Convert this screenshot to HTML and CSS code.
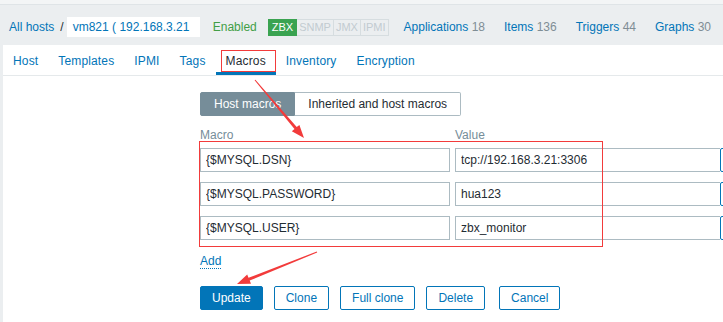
FILE: index.html
```html
<!DOCTYPE html>
<html lang="en">
<head>
<meta charset="utf-8">
<title>Host macros</title>
<link rel="stylesheet" href="styles.css">
</head>
<body>
<div class="page">
  <div class="topline"></div>
  <header class="header">
    <nav class="crumbs">
      <a class="link">All hosts</a><span class="sep">/</span><a class="link hostbox">vm821 ( 192.168.3.21</a>
    </nav>
    <span class="enabled">Enabled</span>
    <span class="badges"><span class="badge on">ZBX</span><span class="badge">SNMP</span><span class="badge">JMX</span><span class="badge">IPMI</span></span>
    <nav class="subnav">
      <span class="subitem"><a class="link">Applications</a> <span class="count">18</span></span>
      <span class="subitem"><a class="link">Items</a> <span class="count">136</span></span>
      <span class="subitem"><a class="link">Triggers</a> <span class="count">44</span></span>
      <span class="subitem"><a class="link">Graphs</a> <span class="count">30</span></span>
    </nav>
  </header>
  <main class="panel">
    <ul class="tabs">
      <li class="tab">Host</li>
      <li class="tab">Templates</li>
      <li class="tab">IPMI</li>
      <li class="tab">Tags</li>
      <li class="tab active">Macros</li>
      <li class="tab">Inventory</li>
      <li class="tab">Encryption</li>
    </ul>
    <div class="content">
      <div class="toggle"><button class="seg active">Host macros</button><button class="seg">Inherited and host macros</button></div>
      <div class="labels"><span class="col-macro">Macro</span><span class="col-value">Value</span></div>
      <div class="rows">
        <div class="row"><input class="field col-macro" value="{$MYSQL.DSN}"><input class="field col-value" value="tcp://192.168.3.21:3306"><button class="remove" aria-label="Remove"></button></div>
        <div class="row"><input class="field col-macro" value="{$MYSQL.PASSWORD}"><input class="field col-value" value="hua123"><button class="remove" aria-label="Remove"></button></div>
        <div class="row"><input class="field col-macro" value="{$MYSQL.USER}"><input class="field col-value" value="zbx_monitor"><button class="remove" aria-label="Remove"></button></div>
      </div>
      <div class="addwrap"><a class="add">Add</a></div>
      <div class="actions">
        <button class="btn primary">Update</button>
        <button class="btn">Clone</button>
        <button class="btn">Full clone</button>
        <button class="btn">Delete</button>
        <button class="btn cancel">Cancel</button>
      </div>
    </div>
  </main>
  <div class="mark mark-tab"></div>
  <div class="mark mark-rows"></div>
  <svg class="annot" width="723" height="322" viewBox="0 0 723 322">
    <polygon fill="#f23b3b" points="254.6,80.3 255.4,79.7 296.7,127.1 299.4,124.9 304,138 291.8,131.3 294.5,129.1"/>
    <polygon fill="#f23b3b" points="316.8,251.5 317.2,252.5 249.7,280.6 251,283.8 237,284 247.2,274.6 248.5,277.8"/>
  </svg>
</div>
</body>
</html>
```

FILE: styles.css
```css
html, body {
  margin: 0;
  padding: 0;
}
body {
  background: #ebeef0;
  font-family: "Liberation Sans", Arial, sans-serif;
  font-size: 12px;
  color: #1f2c33;
  overflow: hidden;
}
.page {
  position: relative;
  width: 723px;
  height: 322px;
  overflow: hidden;
}
.topline {
  height: 4px;
  background: #f3f5f6;
  border-bottom: 1px solid #dfe4e7;
}
.header {
  height: 40px;
  box-sizing: border-box;
  padding: 4px 0 0 9px;
  display: flex;
  align-items: center;
  white-space: nowrap;
}
.link {
  color: #0275b8;
  text-decoration: none;
}
.crumbs {
  display: flex;
  align-items: center;
}
.sep {
  color: #1f2c33;
  margin: 0 3px 0 6px;
}
.hostbox {
  background: #fff;
  height: 20px;
  line-height: 20px;
  padding: 0 7px 0 6px;
  width: 120px;
  overflow: hidden;
}
.enabled {
  color: #429e47;
  margin-left: 13px;
}
.badges {
  display: flex;
  margin-left: 11px;
  height: 17px;
}
.badge {
  font-size: 11px;
  line-height: 15px;
  padding: 0 2px;
  border: 1px solid #d6dde0;
  border-left: none;
  color: #c2cbd0;
}
.badge.on {
  background: #3aa351;
  border-color: #3aa351;
  color: #fff;
  border-left: 1px solid #3aa351;
  padding: 0 3px;
}
.subnav {
  display: flex;
  gap: 19px;
  margin-left: 15px;
}
.count {
  color: #7f8d95;
}
.panel {
  background: #fff;
  margin-left: 3px;
  height: 277px;
}
.tabs {
  list-style: none;
  margin: 0;
  padding: 0;
  display: flex;
  height: 30px;
  border-bottom: 1px solid #e5e9eb;
}
.tab {
  color: #0275b8;
  padding: 2px 10px 0;
  line-height: 28px;
  letter-spacing: 0.15px;
}
.tab.active {
  color: #1f2c33;
  box-shadow: inset 0 -3px 0 #0275b8;
}
.content {
  padding: 16px 0 0 197px;
}
.toggle {
  display: flex;
}
.seg {
  font: inherit;
  height: 24px;
  padding: 0 13px;
  border: 1px solid #acbbc2;
  background: #fff;
  color: #1f2c33;
  margin: 0;
}
.seg.active {
  background: #768d99;
  border-color: #768d99;
  color: #fff;
  border-radius: 2px 0 0 2px;
}
.seg + .seg {
  border-left: none;
  border-radius: 0 2px 2px 0;
}
.labels {
  display: flex;
  gap: 5px;
  margin-top: 12px;
  line-height: 14px;
  color: #768d99;
}
.col-macro {
  width: 250px;
  flex: none;
  box-sizing: border-box;
}
.col-value {
  width: 265px;
  flex: none;
  box-sizing: border-box;
}
.rows {
  display: flex;
  flex-direction: column;
  gap: 10px;
  margin-top: 6px;
}
.row {
  display: flex;
  gap: 5px;
}
.field {
  height: 24px;
  border: 1px solid #acbbc2;
  padding: 0 5px;
  font: inherit;
  color: #1f2c33;
  background: #fff;
  margin: 0;
  outline: none;
}
.field.col-value {
  border-right: none;
  margin-right: -5px;
}
.remove {
  flex: none;
  width: 70px;
  height: 24px;
  margin: 0;
  padding: 0;
  background: #fff;
  border: 1px solid #0275b8;
  border-radius: 2px;
}
.addwrap {
  margin-top: 14px;
  line-height: 14px;
}
.add {
  color: #0275b8;
  border-bottom: 1px dotted #0275b8;
}
.actions {
  display: flex;
  gap: 11px;
  margin-top: 18px;
}
.btn {
  font: inherit;
  height: 24px;
  margin: 0;
  padding: 0 11px;
  border: 1px solid #0275b8;
  border-radius: 2px;
  background: #fff;
  color: #0275b8;
}
.btn.primary {
  background: #0275b8;
  color: #fff;
}
.btn.cancel {
  margin-left: 3px;
}
.mark {
  position: absolute;
  border: 1px solid #f23b3b;
  box-sizing: border-box;
  pointer-events: none;
}
.mark-tab {
  left: 221px;
  top: 50px;
  width: 55px;
  height: 22px;
}
.mark-rows {
  left: 199px;
  top: 141px;
  width: 404px;
  height: 106px;
}
.annot {
  position: absolute;
  top: 0;
  left: 0;
  pointer-events: none;
}
```
